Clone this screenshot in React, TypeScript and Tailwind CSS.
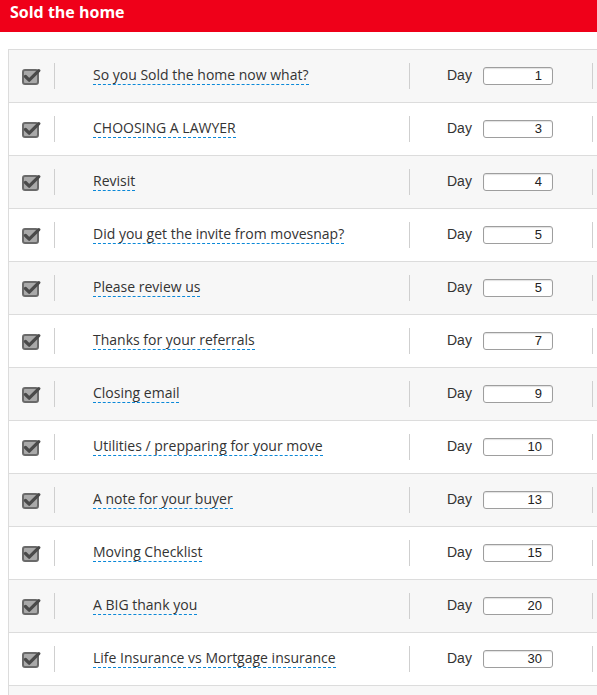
import React from 'react';

const steps = [
  { title: 'So you Sold the home now what?', day: 1 },
  { title: 'CHOOSING A LAWYER', day: 3 },
  { title: 'Revisit', day: 4 },
  { title: 'Did you get the invite from movesnap?', day: 5 },
  { title: 'Please review us', day: 5 },
  { title: 'Thanks for your referrals', day: 7 },
  { title: 'Closing email', day: 9 },
  { title: 'Utilities / prepparing for your move', day: 10 },
  { title: 'A note for your buyer', day: 13 },
  { title: 'Moving Checklist', day: 15 },
  { title: 'A BIG thank you', day: 20 },
  { title: 'Life Insurance vs Mortgage insurance', day: 30 },
];

const CheckIcon = () => (
  <svg width="19" height="17" viewBox="0 0 19 17" className="block">
    <rect x="1" y="2" width="15" height="14" rx="2" fill="#a9a9a9" stroke="#6a6a6a" strokeWidth="2" />
    <path d="M3.5 8.5 L7.2 12.2 L16.8 2.6" fill="none" stroke="#4a4a4a" strokeWidth="3.2" strokeLinecap="round" strokeLinejoin="round" />
  </svg>
);

const StepRow = ({ title, day, odd }: { title: string; day: number; odd: boolean }) => (
  <div className={`flex h-[53px] items-center border-b border-[#dcdcdc] ${odd ? 'bg-[#f7f7f7]' : 'bg-white'}`}>
    <div className="ml-[13px] w-[19px]">
      <CheckIcon />
    </div>
    <div className="ml-[13px] h-[26px] w-px bg-[#cfcfcf]" />
    <div className="flex w-[354px] pb-[1px] pl-[38px]">
      <span className="border-b border-dashed border-[#0a88d8] text-[14px] leading-[18px] text-[#333]">
        {title}
      </span>
    </div>
    <div className="h-[26px] w-px bg-[#cfcfcf]" />
    <div className="flex w-[182px] items-center pl-[37px]">
      <span className="w-[36px] -mt-[2px] text-[14px] text-[#333] [font-family:'Liberation_Sans',Arial,sans-serif]">Day</span>
      <div className="flex h-[18px] w-[70px] items-center justify-end rounded-[3px] border border-[#9e9e9e] bg-white pr-[10px] text-[13px] text-[#222] shadow-[inset_0_1px_1px_rgba(0,0,0,0.12)] [font-family:'Liberation_Sans',Arial,sans-serif]">
        {day}
      </div>
    </div>
    <div className="h-[26px] w-px bg-[#cfcfcf]" />
  </div>
);

const App = () => {
  return (
    <main className="h-[695px] w-[597px] overflow-hidden bg-white [font-family:'Open_Sans',sans-serif]">
      <div className="h-[32px] bg-[#ef0019] pl-[10px] pt-[1px]">
        <h2 className="text-[16px] font-bold leading-[22px] text-white">Sold the home</h2>
      </div>
      <div className="ml-[8px] mt-[17px] w-[640px] border-l border-t border-[#dcdcdc]">
        {steps.map((s, i) => (
          <StepRow key={i} title={s.title} day={s.day} odd={i % 2 === 0} />
        ))}
        <div className="h-[53px] bg-[#f7f7f7]" />
      </div>
    </main>
  );
};

export default App;
